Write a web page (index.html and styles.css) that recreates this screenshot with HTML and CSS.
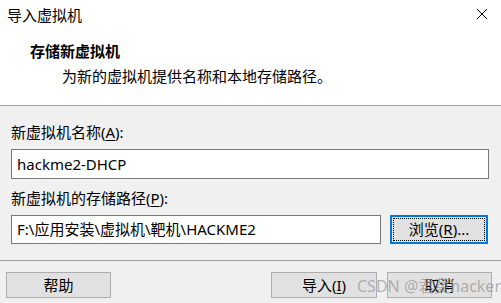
FILE: index.html
```html
<!DOCTYPE html>
<html lang="zh-CN">
<head>
  <meta charset="UTF-8">
  <title>导入虚拟机</title>
  <link rel="stylesheet" href="styles.css">
</head>
<body>
  <div class="dialog">
    <!-- barra de título -->
    <div class="titlebar">
      <span class="title">导入虚拟机</span>
      <svg class="close" width="12" height="12" viewBox="0 0 12 12">
        <path d="M1 1L11 11M11 1L1 11" stroke="#000" stroke-width="1" fill="none"/>
      </svg>
    </div>

    <!-- cabecera -->
    <div class="header">
      <div class="heading">存储新虚拟机</div>
      <div class="subtitle">为新的虚拟机提供名称和本地存储路径。</div>
    </div>

    <!-- contenido -->
    <div class="content">
      <div class="label">新虚拟机名称(<u>A</u>):</div>
      <div class="field">hackme2-DHCP</div>
      <div class="label label-path">新虚拟机的存储路径(<u>P</u>):</div>
      <div class="path-row">
        <div class="field field-path">F:\应用安装\虚拟机\靶机\HACKME2</div>
        <button class="btn btn-browse"><span class="focus">浏览(<u>R</u>)...</span></button>
      </div>
    </div>

    <!-- pie -->
    <div class="footer">
      <button class="btn">帮助</button>
      <div class="footer-right">
        <button class="btn">导入(<u>I</u>)</button>
        <button class="btn">取消</button>
      </div>
      <span class="watermark">CSDN @君莫hacker</span>
    </div>
  </div>
</body>
</html>
```

FILE: styles.css
```css
/* BASE */
* { box-sizing: border-box; margin: 0; padding: 0; }
body {
  font-family: "Noto Sans", "Noto Sans CJK SC", sans-serif;
  font-size: 15px; color: #000; background: #fff;
}
.dialog { width: 501px; height: 303px; overflow: hidden; }
u { text-decoration: underline; text-underline-offset: 2px; }

/* TÍTULO */
.titlebar {
  height: 31px; display: flex; align-items: center;
  justify-content: space-between; padding: 0 13px 0 7px;
}
.title { line-height: 20px; margin-top: -2px; }
.close { margin-top: -3px; }

/* CABECERA */
.header {
  height: 75px; background: #fff;
  border-bottom: 1px solid #a0a0a0; padding: 10px 0 0 30px;
}
.heading { font-weight: bold; line-height: 20px; }
.subtitle { line-height: 20px; margin-top: 5px; padding-left: 32px; }

/* CONTENIDO */
.content {
  height: 155px; background: #f0f0f0;
  border-bottom: 1px solid #a0a0a0; padding: 16px 12px 0 11px;
}
.label { line-height: 20px; }
.label-path { margin-top: 9px; }
.field {
  margin-top: 7px; height: 30px; background: #fff;
  border: 1px solid #7a7a7a; padding: 0 5px;
  line-height: 28px; white-space: nowrap; overflow: hidden;
}
.path-row { display: flex; margin-top: 7px; }
.path-row .field { margin-top: 0; height: 29px; line-height: 27px; }
.field-path { width: 370px; }

/* BOTONES */
.btn {
  font: inherit; color: #000; background: #e1e1e1;
  border: 1px solid #adadad; height: 26px; width: 105px;
  line-height: 22px; cursor: pointer;
}
.btn-browse {
  margin-left: 9px; width: 98px; height: 29px;
  border: 2px solid #0078d7; padding: 1px;
}
.btn-browse .focus {
  display: block; height: 100%; border: 1px dotted #000; line-height: 21px;
}

/* PIE */
.footer {
  position: relative; height: 42px; background: #f0f0f0;
  display: flex; justify-content: space-between; padding: 11px 9px 0 6px;
}
.footer-right { display: flex; gap: 10px; }
.footer-right .btn:first-child { width: 106px; }
.watermark {
  position: absolute; left: 357px; top: 15px;
  color: rgba(150, 150, 150, 0.7); font-size: 16px; line-height: 20px;
  white-space: nowrap; pointer-events: none;
}
```
